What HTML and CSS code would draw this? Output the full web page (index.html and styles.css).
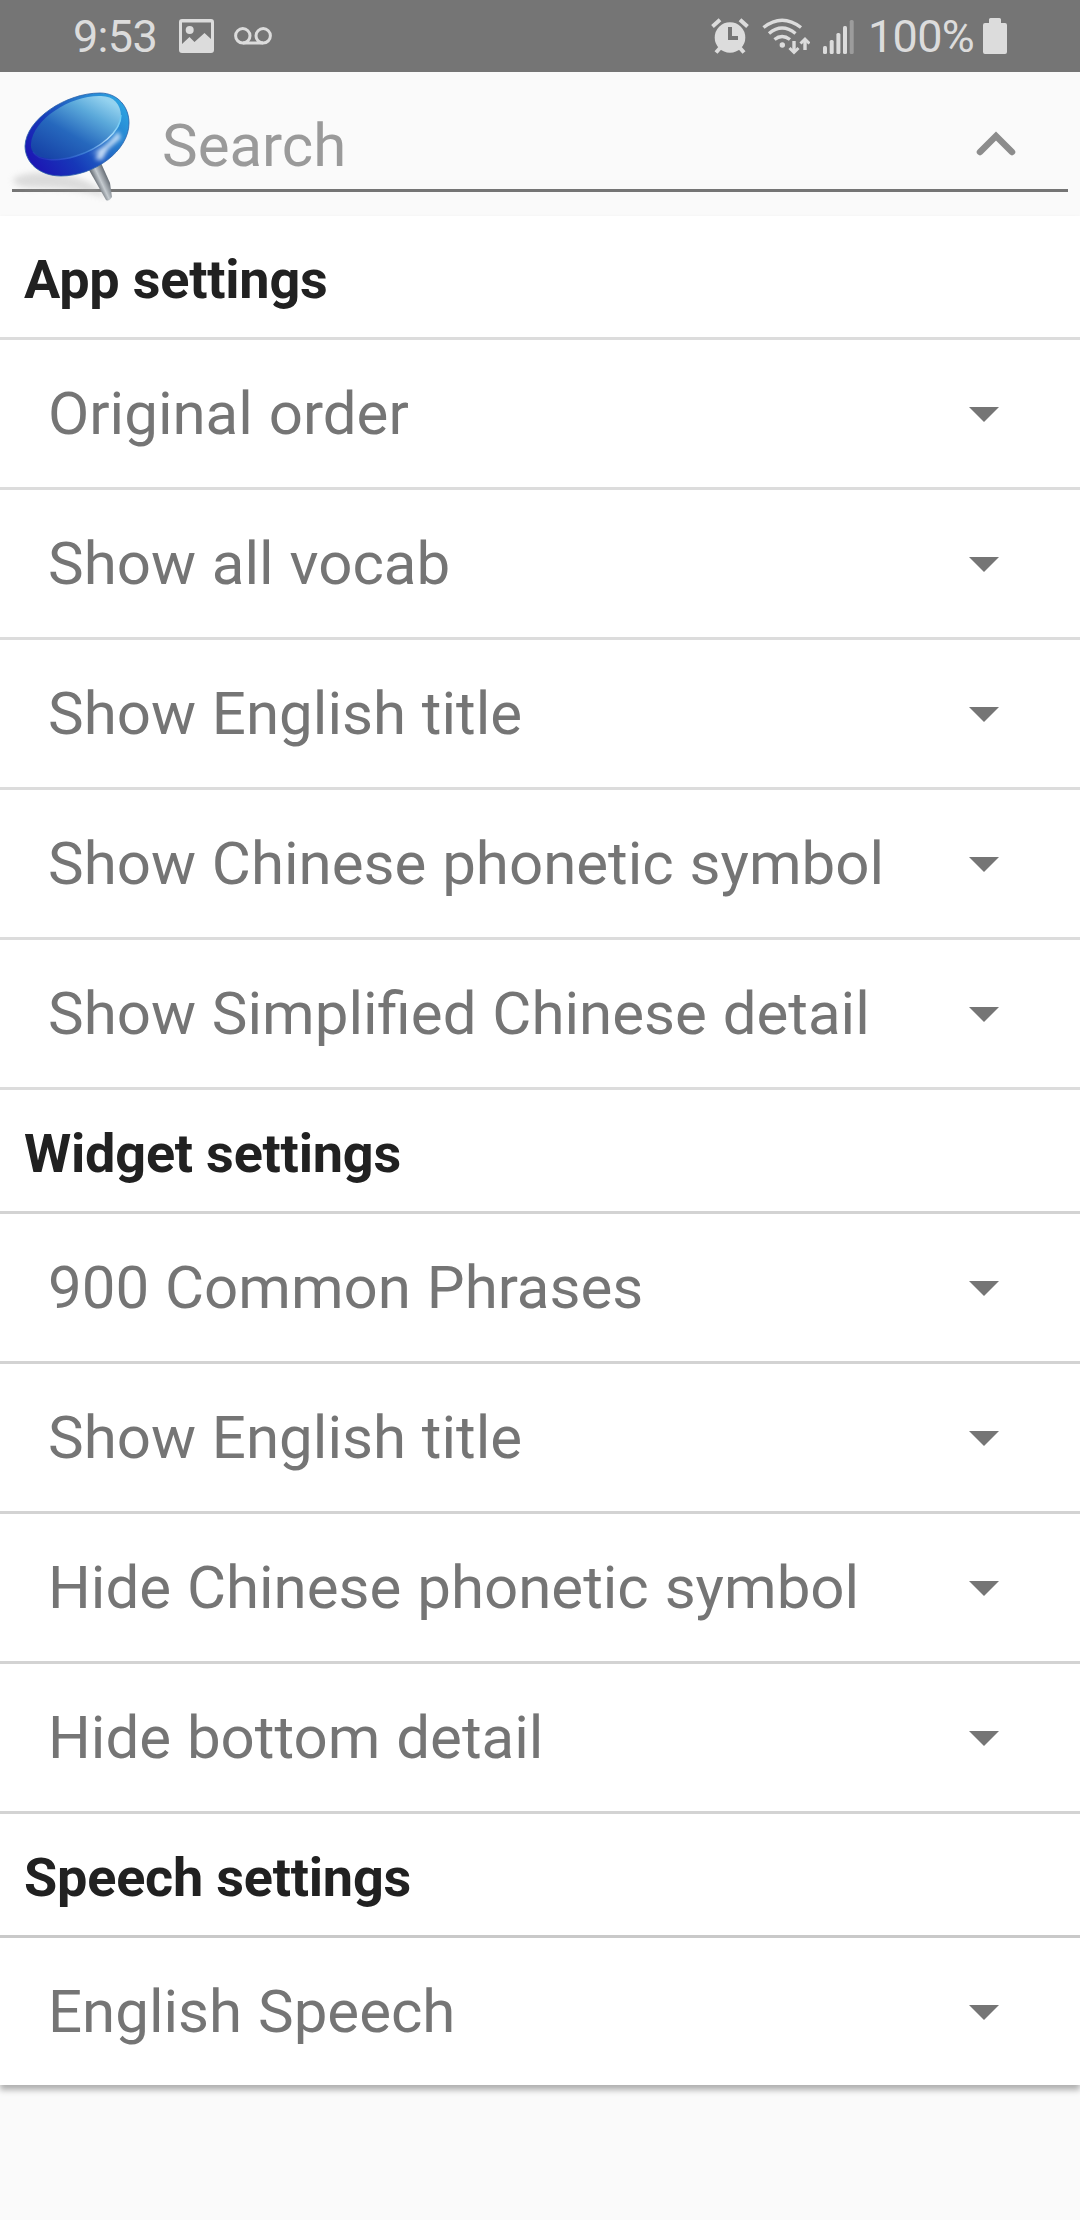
FILE: index.html
```html
<!DOCTYPE html>
<html lang="en">
<head>
<meta charset="utf-8">
<title>Settings</title>
<link rel="stylesheet" href="styles.css">
</head>
<body>
<header class="status">
  <span class="clock">9:53</span>
  <svg class="ic-image" width="35" height="34" viewBox="0 0 35 34"><path fill="#dcdcdc" fill-rule="evenodd" d="M3 0H32Q35 0 35 3V31Q35 34 32 34H3Q0 34 0 31V3Q0 0 3 0ZM3 3.500V25L10.500 18L15.500 23L25.500 14L32 20V3.500Z"/><circle cx="10.700" cy="11" r="4" fill="#dcdcdc"/></svg>
  <svg class="ic-voicemail" width="38" height="18" viewBox="0 0 38 18" fill="none" stroke="#dcdcdc" stroke-width="3"><circle cx="8.800" cy="8.800" r="7.200"/><circle cx="29.200" cy="8.800" r="7.200"/><path d="M9 16H29"/></svg>
  <span class="spacer"></span>
  <svg class="ic-alarm" width="38" height="36" viewBox="0 0 38 36"><circle cx="19" cy="19.500" r="15.300" fill="#dcdcdc"/><path d="M1.500 8.500L9 1.800M36.500 8.500L29 1.800M9 30L5 34.500M29 30L33 34.500" stroke="#dcdcdc" stroke-width="4"/><path d="M19 9V20H27" fill="none" stroke="#757575" stroke-width="4"/></svg>
  <svg class="ic-wifi" width="48" height="37" viewBox="0 0 48 37" fill="none" stroke="#dcdcdc" stroke-width="3.400"><path d="M1.500 9.500Q20 -5 39 9.500M7 15.500Q20 4.500 33.500 15.500M12.500 21.500Q20 15.500 28 21.500"/><circle cx="20.300" cy="27" r="2.700" fill="#dcdcdc" stroke="none"/><path d="M32 23V33M43 32V22"/><path d="M27.500 30L32 34.500L36.500 30M38.500 25.500L43 21L47.500 25.500" stroke-width="3"/></svg>
  <svg class="ic-signal" width="31" height="34" viewBox="0 0 31 34" fill="#dcdcdc"><rect y="26" width="4" height="8" rx="1.500"/><rect x="6.700" y="20" width="4" height="14" rx="1.500"/><rect x="13.400" y="13" width="4" height="21" rx="1.500"/><rect x="20" y="6" width="4" height="28" rx="1.500"/><rect x="26.700" width="4" height="34" rx="1.500" fill="#9c9c9c"/></svg>
  <span class="percent">100%</span>
  <svg class="ic-battery" width="24" height="36" viewBox="0 0 24 36"><path fill="#dcdcdc" d="M7.500 0H16.500Q18 0 18 1.500V5H22Q24 5 24 7V34Q24 36 22 36H2Q0 36 0 34V7Q0 5 2 5H6V1.500Q6 0 7.500 0Z"/></svg>
</header>
<div class="search">
  <svg class="pin" width="144" height="144" viewBox="0 72 144 144">
    <defs>
      <linearGradient id="rim" gradientUnits="userSpaceOnUse" x1="42" y1="172" x2="124" y2="108"><stop offset="0" stop-color="#1c18b4"/><stop offset=".3" stop-color="#1638b8"/><stop offset=".65" stop-color="#2470c8"/><stop offset="1" stop-color="#2ba0e0"/></linearGradient>
      <linearGradient id="face" gradientUnits="userSpaceOnUse" x1="58" y1="164" x2="98" y2="95"><stop offset="0" stop-color="#1744a8"/><stop offset=".4" stop-color="#2668bd"/><stop offset=".75" stop-color="#5ba9da"/><stop offset="1" stop-color="#94d2ef"/></linearGradient>
      <linearGradient id="edge" gradientUnits="userSpaceOnUse" x1="32" y1="158" x2="122" y2="110"><stop offset="0" stop-color="#3965d0" stop-opacity=".2"/><stop offset=".5" stop-color="#4b91df" stop-opacity=".7"/><stop offset=".75" stop-color="#b4dcfa"/><stop offset="1" stop-color="#58c6f2"/></linearGradient>
      <linearGradient id="steel" gradientUnits="userSpaceOnUse" x1="95" y1="182" x2="108" y2="176"><stop offset="0" stop-color="#666c73"/><stop offset=".4" stop-color="#c5cbd0"/><stop offset="1" stop-color="#5b626a"/></linearGradient>
      <filter id="soft" x="-50%" y="-50%" width="200%" height="200%"><feGaussianBlur stdDeviation="3"/></filter>
      <filter id="glint" x="-50%" y="-50%" width="200%" height="200%"><feGaussianBlur stdDeviation="2"/></filter>
      <clipPath id="head"><path d="M25 146C26 119 66 93 100 93C118 93 129 107 129 123C129 151 94 176 61 176C40 176 25 163 25 146Z"/></clipPath>
    </defs>
    <rect x="12" y="189" width="132" height="3" fill="#757575"/>
    <path d="M14 178Q30 170 62 174Q95 180 107 198Q80 188 42 188Q8 188 14 178Z" fill="#aaa" opacity=".38" filter="url(#soft)"/>
    <path d="M89 170L101 163L110 183L112 197Q109 202 106 200Z" fill="url(#steel)"/>
    <path d="M25 146C26 119 66 93 100 93C118 93 129 107 129 123C129 151 94 176 61 176C40 176 25 163 25 146Z" fill="url(#rim)" stroke="#2860a8" stroke-width=".8"/>
    <g clip-path="url(#head)"><path d="M90 154C102 149 112 141 118 131L121 138L108 149L102 160L95 159L99 152Z" fill="#e4f2ff" opacity=".85" filter="url(#glint)"/></g>
    <path d="M31 144C33 119 70 96 99 96C113 95 121 104 121 116C121 139 82 159 54 159C40 159 30 154 31 144Z" fill="url(#face)"/>
    <path d="M33 152C38 161 57 162 76 156C99 149 121 132 121 115" fill="none" stroke="url(#edge)" stroke-width="1.500"/>
  </svg>
  <span class="hint">Search</span>
  <svg class="collapse" width="42" height="28" viewBox="0 0 42 28"><path d="M5 22L21 6L37 22" fill="none" stroke="#8c8c8c" stroke-width="6.500" stroke-linecap="round"/></svg>
</div>
<main class="list">
  <section class="app">
    <h2 class="title">App settings</h2>
    <div class="row">Original order<i class="arrow"></i></div>
    <div class="row">Show all vocab<i class="arrow"></i></div>
    <div class="row">Show English title<i class="arrow"></i></div>
    <div class="row">Show Chinese phonetic symbol<i class="arrow"></i></div>
    <div class="row">Show Simplified Chinese detail<i class="arrow"></i></div>
  </section>
  <section class="widget">
    <h2 class="title">Widget settings</h2>
    <div class="row">900 Common Phrases<i class="arrow"></i></div>
    <div class="row">Show English title<i class="arrow"></i></div>
    <div class="row">Hide Chinese phonetic symbol<i class="arrow"></i></div>
    <div class="row">Hide bottom detail<i class="arrow"></i></div>
  </section>
  <section class="speech">
    <h2 class="title">Speech settings</h2>
    <div class="row last">English Speech<i class="arrow"></i></div>
  </section>
</main>
</body>
</html>
```
FILE: styles.css
```css
* { box-sizing: border-box; }
body { margin: 0; width: 1080px; height: 2220px; overflow: hidden; background: #fafafa; font-family: Roboto, "Liberation Sans", sans-serif; }
svg { display: block; flex: none; }
.status { height: 72px; display: flex; align-items: flex-start; padding: 0 73px; background: #757575; color: #dcdcdc; font-size: 45px; line-height: 74px; letter-spacing: -.7px; }
.clock { width: 106px; }
.ic-image { margin-top: 19px; }
.ic-voicemail { margin: 27px 0 0 20px; }
.spacer { flex: 1; }
.ic-alarm { margin-top: 18px; }
.ic-wifi { margin: 18px 0 0 13px; }
.ic-signal { margin: 20px 14px 0 13px; }
.percent { width: 115px; white-space: nowrap; }
.ic-battery { margin-top: 18px; }
.search { height: 144px; display: flex; align-items: center; background: linear-gradient(#757575, #757575) 12px 117px / 1056px 3px no-repeat; }
.hint { flex: 1; margin-left: 18px; color: #9a9a9a; font-size: 60px; line-height: 144px; padding-top: 3px; }
.collapse { margin-right: 63px; }
.list { background: #fff; height: 1869px; box-shadow: 0 5px 6px rgba(0,0,0,.3); }
.app { --divider: #dcdcdc; }
.widget { --divider: #d3d3d3; }
.speech { --divider: #c9c9c9; }
.title { margin: 0; height: 124px; padding: 6px 24px 0; border-bottom: 3px solid var(--divider); font-size: 54px; font-weight: 700; line-height: 115px; letter-spacing: -.22px; color: #212121; }
.row { height: 150px; display: flex; align-items: center; justify-content: space-between; padding: 0 81px 0 48px; border-bottom: 3px solid var(--divider); font-size: 60px; word-spacing: 1px; color: #757575; }
.row.last { height: 147px; border: 0; }
.arrow { width: 30px; height: 15px; margin-top: 2px; background: #757575; clip-path: polygon(0 0, 100% 0, 50% 100%); }
```
